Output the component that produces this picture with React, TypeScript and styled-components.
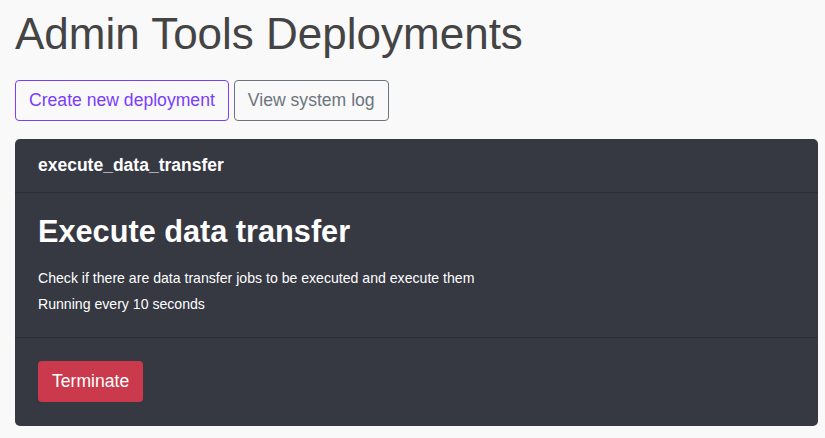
import React from "react";
import styled, { createGlobalStyle } from "styled-components";

const Global = createGlobalStyle`
  html, body { margin: 0; padding: 0; background: #f9f9f9; }
  body { font-family: "Liberation Sans", Arial, sans-serif; color: #444; }
  * { box-sizing: border-box; }
`;

const Page = styled.div`
  padding: 0 7px 0 15px;
  display: flex;
  flex-direction: column;
`;

const Title = styled.h1`
  margin: 8px 0 0;
  font-size: 44px;
  font-weight: 400;
  line-height: 52px;
  color: #444;
`;

const Toolbar = styled.div`
  display: flex;
  gap: 5px;
  margin-top: 20px;
`;

const OutlineButton = styled.button<{ $color: string }>`
  font-family: inherit;
  font-size: 17.6px;
  line-height: 25px;
  padding: 7px 13px;
  background: transparent;
  border: 1px solid ${(p) => p.$color};
  color: ${(p) => p.$color};
  border-radius: 4px;
  cursor: pointer;
`;

const Card = styled.div`
  margin-top: 18px;
  background: #363842;
  border-radius: 5px;
  color: #fff;
  display: flex;
  flex-direction: column;
`;

const CardHeader = styled.div`
  padding: 0 23px;
  height: 54px;
  display: flex;
  align-items: center;
  font-weight: 700;
  font-size: 17.5px;
  border-bottom: 1px solid #2c2e36;
`;

const CardBody = styled.div`
  padding: 20px 23px 16px;
  border-bottom: 1px solid #2c2e36;
`;

const CardTitle = styled.h2`
  margin: 0 0 18px;
  font-size: 30.7px;
  line-height: 38px;
  font-weight: 700;
`;

const Text = styled.p`
  margin: 0 0 8px;
  font-size: 14.1px;
  line-height: 18px;
`;

const CardFooter = styled.div`
  padding: 23px 23px 24px;
  display: flex;
`;

const DangerButton = styled.button`
  font-family: inherit;
  font-size: 17.6px;
  line-height: 25px;
  padding: 8px 14px;
  background: #ca3a4c;
  border: none;
  color: #fff;
  border-radius: 4px;
  cursor: pointer;
`;

export default function App() {
  return (
    <>
      <Global />
      <Page>
        <Title>Admin Tools Deployments</Title>
        <Toolbar>
          <OutlineButton $color="#7a3cff">Create new deployment</OutlineButton>
          <OutlineButton $color="#6c757d">View system log</OutlineButton>
        </Toolbar>
        <Card>
          <CardHeader>execute_data_transfer</CardHeader>
          <CardBody>
            <CardTitle>Execute data transfer</CardTitle>
            <Text>Check if there are data transfer jobs to be executed and execute them</Text>
            <Text>Running every 10 seconds</Text>
          </CardBody>
          <CardFooter>
            <DangerButton>Terminate</DangerButton>
          </CardFooter>
        </Card>
      </Page>
    </>
  );
}
